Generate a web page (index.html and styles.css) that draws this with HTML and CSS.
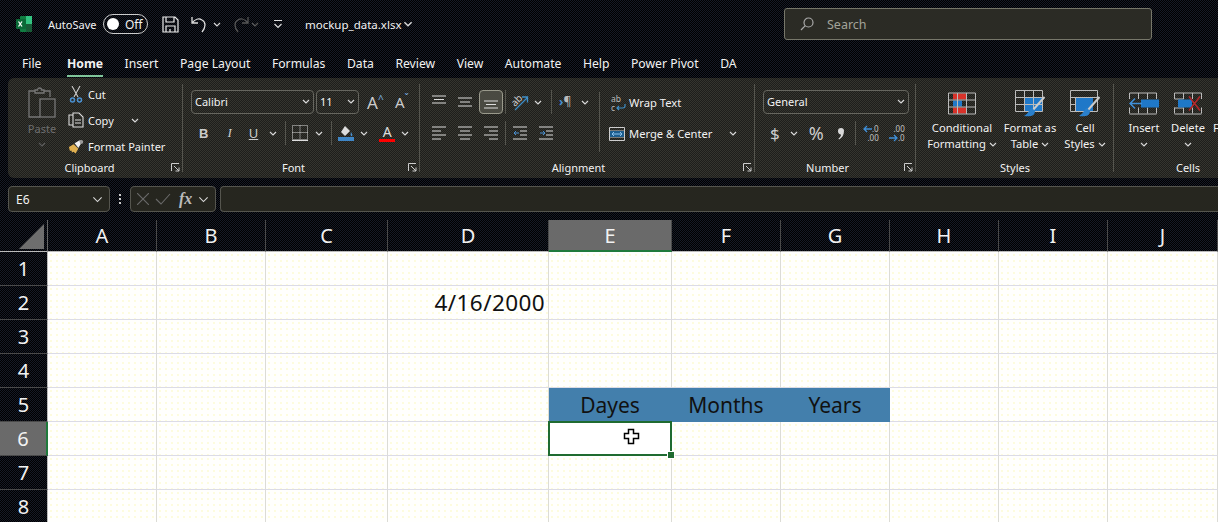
FILE: index.html
```html
<!DOCTYPE html>
<html lang="en">
<head>
  <meta charset="UTF-8" />
  <title>mockup_data.xlsx - Excel</title>
  <link rel="stylesheet" href="styles.css">
</head>
<body>
  <header class="titlebar">
    <svg class="logo" width="18" height="18" viewBox="0 0 18 18"><rect x="5" y="1" width="12" height="16" rx="1" fill="#107c41"/><rect x="11" y="1" width="6" height="8" fill="#33c481"/><rect x="11" y="9" width="6" height="8" fill="#185c37"/><rect x="1" y="4" width="10" height="10" rx="1" fill="#0b6a37"/><path d="M3.5 6.5l3.5 5M7 6.5l-3.5 5" stroke="#fff" stroke-width="1.3"/></svg>
    <span class="autosave">AutoSave</span>
    <span class="toggle"><i></i>Off</span>
    <svg class="qa-save" width="17" height="17" viewBox="0 0 17 17" fill="none" stroke="#eee" stroke-width="1.2"><path d="M1 1h12l3 3v12H1zM4 1v5h8V1M4 16v-6h9v6M8 13v3"/></svg>
    <svg class="qa-undo" width="18" height="18" viewBox="0 0 18 18" fill="none" stroke="#ddd" stroke-width="1.3"><path d="M1 2v6h6M1 8c3-4 7-5 10-3 4 2 4 7 0 12"/></svg>
    <svg class="chev qa-c1" viewBox="0 0 8 5"><path d="M1 1l3 3 3-3"/></svg>
    <svg class="qa-redo" width="18" height="18" viewBox="0 0 18 18" fill="none" stroke="#555" stroke-width="1.3"><path d="M17 2v6h-6M17 8c-3-4-7-5-10-3-4 2-4 7 0 12"/></svg>
    <svg class="chev dim qa-c2" viewBox="0 0 8 5"><path d="M1 1l3 3 3-3"/></svg>
    <svg class="qa-more" width="10" height="10" viewBox="0 0 10 10" fill="none" stroke="#ddd" stroke-width="1.2"><path d="M1 1.5h8M1.5 5l3.5 3.5L8.500 5"/></svg>
    <span class="filename">mockup_data.xlsx</span>
    <svg class="chev file-chev" viewBox="0 0 8 5"><path d="M1 1l3 3 3-3"/></svg>
    <div class="search">
      <svg width="14" height="14" viewBox="0 0 14 14" fill="none" stroke="#aaa" stroke-width="1.2"><circle cx="8.500" cy="5.500" r="4.500"/><path d="M5.300 8.700L1 13"/></svg>
      <span>Search</span>
    </div>
  </header>

  <nav class="tabs">
    <a>File</a><a class="active">Home</a><a>Insert</a><a>Page Layout</a><a>Formulas</a><a>Data</a><a>Review</a><a>View</a><a>Automate</a><a>Help</a><a>Power Pivot</a><a>DA</a>
  </nav>

  <section class="ribbon">
    <div class="group g-clipboard">
      <div class="group-body clip">
        <div class="paste">
          <svg width="29" height="33" viewBox="0 0 29 33" fill="none" stroke="#777" stroke-width="1.3"><path d="M7 4H1v26h11M16 4h6v6"/><path d="M7 5V3h2.500a2 2 0 0 1 4 0H16v3H7z"/><rect x="12" y="12" width="15" height="18"/></svg>
          <span>Paste</span>
          <svg class="chev dim" viewBox="0 0 8 5"><path d="M1 1l3 3 3-3"/></svg>
        </div>
        <ul class="clip-list">
          <li><svg width="14" height="17" viewBox="0 0 14 17" fill="none" stroke="#ccc" stroke-width="1.1"><path d="M3 0l6 11M11 0L5 11"/><circle cx="3.500" cy="14" r="2" stroke="#4a90d0" stroke-width="1.500"/><circle cx="10.500" cy="14" r="2" stroke="#4a90d0" stroke-width="1.500"/></svg>Cut</li>
          <li><svg width="16" height="16" viewBox="0 0 16 16" fill="none" stroke="#ddd" stroke-width="1.1"><path d="M5 3H1v10h4"/><path d="M5 1h6l4 4v10H5zM7 8h6M7 11h6"/></svg>Copy<svg class="chev copy-chev" viewBox="0 0 8 5"><path d="M1 1l3 3 3-3"/></svg></li>
          <li><svg width="17" height="15" viewBox="0 0 17 15"><path d="M1 8l5-3 5 5-3 5-2-2-2 1 0-2-2 0z" fill="#e0b050"/><path d="M7 4l5-3 3 0-1 3-3 5z" fill="#f2f2f2"/><path d="M12 1h4v3l-3 1z" fill="#999"/></svg>Format Painter</li>
        </ul>
      </div>
      <div class="group-label">Clipboard<svg class="launcher" viewBox="0 0 9 9"><path d="M.5 8V.5H8M3 3l5 5M4.500 8H8V4.500"/></svg></div>
    </div>

    <div class="group g-font">
      <div class="group-body stack">
        <div class="line">
          <div class="select font-name"><span>Calibri</span><svg class="chev" viewBox="0 0 8 5"><path d="M1 1l3 3 3-3"/></svg></div>
          <div class="select font-size"><span>11</span><svg class="chev" viewBox="0 0 8 5"><path d="M1 1l3 3 3-3"/></svg></div>
          <span class="grow">A<sup>^</sup></span>
          <span class="grow shrink">A<sup>ˇ</sup></span>
        </div>
        <div class="line tools">
          <b class="t-b">B</b>
          <i class="t-i">I</i>
          <u class="t-u">U</u>
          <svg class="chev t-c1" viewBox="0 0 8 5"><path d="M1 1l3 3 3-3"/></svg>
          <span class="vsep s1"></span>
          <svg class="t-border" width="16" height="16" viewBox="0 0 16 16" fill="none" stroke="#ddd" stroke-dasharray="1 1"><path d="M.5.500h15v14H.5zM8 .5v14M.5 7.500h15"/><path d="M0 15.500h16" stroke-dasharray="none"/></svg>
          <svg class="chev t-c2" viewBox="0 0 8 5"><path d="M1 1l3 3 3-3"/></svg>
          <span class="vsep s2"></span>
          <svg class="t-fill" width="16" height="16" viewBox="0 0 16 16"><path d="M7 1l5 5-5 5-4-4z" fill="#ddd"/><path d="M13 7c1 2 2 3 1 4s-2-1-1-4z" fill="#4a90d0"/><rect y="12" width="16" height="4" fill="#3f86c6"/></svg>
          <svg class="chev t-c3" viewBox="0 0 8 5"><path d="M1 1l3 3 3-3"/></svg>
          <span class="color-a">A</span>
          <svg class="chev t-c4" viewBox="0 0 8 5"><path d="M1 1l3 3 3-3"/></svg>
        </div>
      </div>
      <div class="group-label">Font<svg class="launcher" viewBox="0 0 9 9"><path d="M.5 8V.5H8M3 3l5 5M4.500 8H8V4.500"/></svg></div>
    </div>

    <div class="group g-align">
      <div class="group-body align-body">
        <div class="stack">
          <div class="line al-row">
            <svg class="al" viewBox="0 0 14 14"><path d="M0 1h14M2 4.500h10M0 8h14"/></svg>
            <svg class="al" viewBox="0 0 14 14"><path d="M0 3h14M2 7h10M0 11h14"/></svg>
            <span class="al-on"><svg class="al" viewBox="0 0 14 14"><path d="M0 6h14M2 9.500h10M0 13h14"/></svg></span>
            <span class="vsep"></span>
            <svg class="orient" width="17" height="17" viewBox="0 0 17 17" fill="none"><text x="0" y="10" transform="rotate(-45 5 8)" class="orient-text">ab</text><path d="M3 16L15 4M10 3h5.500v5.500" stroke="#3f8fc8" stroke-width="1.300"/></svg>
            <svg class="chev" viewBox="0 0 8 5"><path d="M1 1l3 3 3-3"/></svg>
            <span class="vsep sep-b"></span>
            <span class="para"><em>›</em>¶</span>
            <svg class="chev" viewBox="0 0 8 5"><path d="M1 1l3 3 3-3"/></svg>
          </div>
          <div class="line al-row second">
            <svg class="al" viewBox="0 0 14 14"><path d="M0 1h14M0 5h9M0 9h14M0 13h9"/></svg>
            <svg class="al" viewBox="0 0 14 14"><path d="M0 1h14M2 5h10M0 9h14M2 13h10"/></svg>
            <svg class="al" viewBox="0 0 14 14"><path d="M0 1h14M5 5h9M0 9h14M5 13h9"/></svg>
            <span class="vsep"></span>
            <svg class="al" viewBox="0 0 14 14"><path d="M0 1h14M7 5h7M7 9h7M0 13h14"/><path d="M6 7H1M3 5L1 7l2 2" stroke="#4a90d0"/></svg>
            <svg class="al" viewBox="0 0 14 14"><path d="M0 1h14M7 5h7M7 9h7M0 13h14"/><path d="M1 7h5M4 5l2 2-2 2" stroke="#4a90d0"/></svg>
          </div>
        </div>
        <span class="vsep tall"></span>
        <ul class="wrap-list">
          <li><span class="ab">ab<br>c<svg width="10" height="8" viewBox="0 0 10 8" fill="none" stroke="#3f8fc8" stroke-width="1.200"><path d="M9 0v2a2 2 0 0 1-2 2H1M3 2L1 4l2 2"/></svg></span>Wrap Text</li>
          <li><svg width="16" height="16" viewBox="0 0 16 16" fill="none" stroke="#ccc"><path d="M.5 1.500h15v13H.5zM.5 5h15M.5 11h15"/><rect x="1" y="5" width="14" height="6" fill="#1d5d8e" stroke="none"/><path d="M3 8h10M5 6L3 8l2 2M11 6l2 2-2 2" stroke="#8cc4ee"/></svg>Merge &amp; Center<svg class="chev merge-chev" viewBox="0 0 8 5"><path d="M1 1l3 3 3-3"/></svg></li>
        </ul>
      </div>
      <div class="group-label">Alignment<svg class="launcher" viewBox="0 0 9 9"><path d="M.5 8V.5H8M3 3l5 5M4.500 8H8V4.500"/></svg></div>
    </div>

    <div class="group g-number">
      <div class="group-body stack">
        <div class="line">
          <div class="select num-format"><span>General</span><svg class="chev" viewBox="0 0 8 5"><path d="M1 1l3 3 3-3"/></svg></div>
        </div>
        <div class="line tools num-tools">
          <span class="sym">$</span>
          <svg class="chev" viewBox="0 0 8 5"><path d="M1 1l3 3 3-3"/></svg>
          <span class="sym pct">%</span>
          <svg class="comma" width="8" height="13" viewBox="0 0 8 13"><path d="M1 4a3 3 0 1 1 6 0c0 4-2 7-5 8.500l-.6-.8C3 10.500 4 9 4 7.500 2 7.500 1 6 1 4z" fill="#d8d8d8"/></svg>
          <span class="vsep"></span>
          <span class="dec">
            <span class="dec-line"><svg width="9" height="8" viewBox="0 0 9 8" fill="none" stroke="#3f8fd8" stroke-width="1.300"><path d="M9 4H1M4 1L1 4l3 3"/></svg>.0</span>
            <span class="dec-line">.00</span>
          </span>
          <span class="dec dec-more">
            <span class="dec-line">.00</span>
            <span class="dec-line"><svg width="9" height="8" viewBox="0 0 9 8" fill="none" stroke="#3f8fd8" stroke-width="1.300"><path d="M0 4h8M5 1l3 3-3 3"/></svg>.0</span>
          </span>
        </div>
      </div>
      <div class="group-label">Number<svg class="launcher" viewBox="0 0 9 9"><path d="M.5 8V.5H8M3 3l5 5M4.500 8H8V4.500"/></svg></div>
    </div>

    <div class="group g-styles">
      <div class="group-body big-row">
        <div class="big">
          <svg width="28" height="22" viewBox="0 0 28 22"><path d="M5 1h13v6H5zM5 15h13v6H5z" fill="#d8322a"/><rect x="5" y="8" width="9" height="6" fill="#1f78c8"/><path d="M.5.500h27v21H.5zM.5 7.500h27M.5 14.500h27M9.500.5v21M18.500.5v21" fill="none" stroke="#bbb"/></svg>
          <span>Conditional<br>Formatting<svg class="chev" viewBox="0 0 8 5"><path d="M1 1l3 3 3-3"/></svg></span>
        </div>
        <div class="big">
          <svg width="30" height="27" viewBox="0 0 30 27"><rect x="10" y="7" width="18" height="14" fill="#1f78c8"/><path d="M.5.500h27v21H.5zM.5 7.500h27M.5 14.500h27M9.500.5v21M18.500.5v21" fill="none" stroke="#bbb"/><path d="M29.500 7L18 20" stroke="#ccc" stroke-width="2"/><path d="M17 18c-3 1-3 5-8 8 6 1 11 0 11-5z" fill="#2a80cc"/></svg>
          <span>Format as<br>Table<svg class="chev" viewBox="0 0 8 5"><path d="M1 1l3 3 3-3"/></svg></span>
        </div>
        <div class="big">
          <svg width="30" height="27" viewBox="0 0 30 27"><rect x="5" y="7" width="18" height="14" fill="#1f78c8"/><path d="M.5.500h27v21H.5zM.5 7.500h27M.5 14.500h5M5.500 7v14M5.500 21.500h18" fill="none" stroke="#bbb"/><path d="M29.500 7L18 20" stroke="#ccc" stroke-width="2"/><path d="M17 18c-3 1-3 5-8 8 6 1 11 0 11-5z" fill="#2a80cc"/></svg>
          <span>Cell<br>Styles<svg class="chev" viewBox="0 0 8 5"><path d="M1 1l3 3 3-3"/></svg></span>
        </div>
      </div>
      <div class="group-label">Styles</div>
    </div>

    <div class="group g-cells">
      <div class="group-body big-row">
        <div class="big cell-btn">
          <svg width="30" height="22" viewBox="0 0 30 22"><path d="M.5.500h27M.5 21.500h27M.5.500v6M.5 15v6M9.500.5v6M18.500.5v6M27.500.5v6M9.500 15v6M18.500 15v6M27.500 15v6" fill="none" stroke="#bbb"/><rect x="12" y="7" width="18" height="8" fill="#1f78c8"/><path d="M13 11H1M6 6l-5 5 5 5" fill="none" stroke="#3f8fd8" stroke-width="1.500"/></svg>
          <span>Insert<br><svg class="chev" viewBox="0 0 8 5"><path d="M1 1l3 3 3-3"/></svg></span>
        </div>
        <div class="big cell-btn">
          <svg width="28" height="22" viewBox="0 0 28 22"><path d="M.5.500h27M.5 21.500h27M.5.500v6M.5 15v6M9.500.5v6M18.500.5v6M27.500.5v6M9.500 15v6M18.500 15v6M27.500 15v6M.5 6.500h9M.5 15.500h9" fill="none" stroke="#bbb"/><rect x="4" y="7" width="14" height="8" fill="#1f78c8"/><path d="M15 4l11 14M26 4L15 18" stroke="#b5282c" stroke-width="1.500"/></svg>
          <span>Delete<br><svg class="chev" viewBox="0 0 8 5"><path d="M1 1l3 3 3-3"/></svg></span>
        </div>
        <div class="big cut-off"><span>F</span></div>
      </div>
      <div class="group-label">Cells</div>
    </div>
  </section>

  <section class="formula-bar">
    <div class="name-box"><span>E6</span><svg class="chev wide" viewBox="0 0 8 5"><path d="M1 1l3 3 3-3"/></svg></div>
    <div class="grip"><i></i><i></i><i></i></div>
    <div class="fx-box">
      <svg width="12" height="12" viewBox="0 0 12 12" stroke="#6a6a6a" fill="none" stroke-width="1.100"><path d="M0 0l12 12M12 0L0 12"/></svg>
      <svg width="16" height="12" viewBox="0 0 16 12" stroke="#6a6a6a" fill="none" stroke-width="1.100"><path d="M1 6l5 5L15 1"/></svg>
      <em>fx</em>
      <svg class="chev wide" viewBox="0 0 8 5"><path d="M1 1l3 3 3-3"/></svg>
    </div>
    <div class="fx-input"></div>
  </section>

  <main class="sheet">
    <div class="corner"><svg width="25" height="25" viewBox="0 0 25 25"><path d="M25 0v25H0z" fill="#6e6e6e"/></svg></div>
    <div class="col">A</div><div class="col">B</div><div class="col">C</div><div class="col">D</div><div class="col col-on">E</div><div class="col">F</div><div class="col">G</div><div class="col">H</div><div class="col">I</div><div class="col">J</div>

    <div class="row">1</div><div class="c"></div><div class="c"></div><div class="c"></div><div class="c"></div><div class="c"></div><div class="c"></div><div class="c"></div><div class="c"></div><div class="c"></div><div class="c"></div>
    <div class="row">2</div><div class="c"></div><div class="c"></div><div class="c"></div><div class="c date">4/16/2000</div><div class="c"></div><div class="c"></div><div class="c"></div><div class="c"></div><div class="c"></div><div class="c"></div>
    <div class="row">3</div><div class="c"></div><div class="c"></div><div class="c"></div><div class="c"></div><div class="c"></div><div class="c"></div><div class="c"></div><div class="c"></div><div class="c"></div><div class="c"></div>
    <div class="row">4</div><div class="c"></div><div class="c"></div><div class="c"></div><div class="c"></div><div class="c"></div><div class="c"></div><div class="c"></div><div class="c"></div><div class="c"></div><div class="c"></div>
    <div class="row">5</div><div class="c"></div><div class="c"></div><div class="c"></div><div class="c"></div><div class="c hd">Dayes</div><div class="c hd">Months</div><div class="c hd">Years</div><div class="c"></div><div class="c"></div><div class="c"></div>
    <div class="row row-on">6</div><div class="c"></div><div class="c"></div><div class="c"></div><div class="c"></div>
    <div class="c selected">
      <svg class="cursor" width="17" height="17" viewBox="0 0 17 17"><path d="M5.500 1.500h5v4h5v5h-5v5h-5v-5h-4v-5h4z" fill="#fff" stroke="#000" stroke-width="1.500"/></svg>
    </div>
    <div class="c"></div><div class="c"></div><div class="c"></div><div class="c"></div><div class="c"></div>
    <div class="row">7</div><div class="c"></div><div class="c"></div><div class="c"></div><div class="c"></div><div class="c"></div><div class="c"></div><div class="c"></div><div class="c"></div><div class="c"></div><div class="c"></div>
    <div class="row">8</div><div class="c"></div><div class="c"></div><div class="c"></div><div class="c"></div><div class="c"></div><div class="c"></div><div class="c"></div><div class="c"></div><div class="c"></div><div class="c"></div>
  </main>
</body>
</html>
```

FILE: styles.css
```css
* {
  box-sizing: border-box;
}

html, body {
  height: 522px;
  overflow: hidden;
}

body {
  margin: 0;
  width: 1218px;
  background: repeating-conic-gradient(#000 0 25%, #161a26 0 50%) 0 0 / 2px 2px;
  color: #f2f2f2;
  font-family: "Noto Sans", "Open Sans", sans-serif;
  font-size: 12px;
}

.chev {
  width: 8px;
  height: 5px;
  flex: none;
  fill: none;
  stroke: #d8d8d8;
  stroke-width: 1.2;
}

.chev.dim {
  stroke: #5c5c5c;
}

.chev.wide {
  width: 11px;
  height: 7px;
  stroke-width: .8;
}

/* title bar */
.titlebar {
  height: 48px;
  display: flex;
  align-items: center;
  padding-left: 15px;
}

.autosave {
  margin-left: 15px;
  width: 50px;
  font-size: 11px;
}

.toggle {
  margin-left: 5px;
  width: 45px;
  height: 20px;
  border: 1px solid #ccc;
  border-radius: 10px;
  display: flex;
  align-items: center;
  padding-left: 3px;
  font-size: 12px;
  gap: 6px;
}

.toggle i {
  width: 12px;
  height: 12px;
  border-radius: 50%;
  background: #fff;
}

.qa-save { margin-left: 14px; }
.qa-undo { margin-left: 12px; }
.qa-c1 { margin-left: 4px; }
.qa-redo { margin-left: 10px; }
.qa-c2 { margin-left: 2px; }
.qa-more { margin-left: 14px; }

.filename {
  margin-left: 22px;
  width: 93px;
  font-size: 11.500px;
  white-space: nowrap;
}

.file-chev {
  margin-left: 5px;
  width: 10px;
  height: 6px;
}

.search {
  margin-left: 371px;
  width: 368px;
  height: 32px;
  background: #2b2b25;
  border: 1px solid #77776a;
  border-radius: 3px;
  display: flex;
  align-items: center;
  gap: 13px;
  padding-left: 15px;
  color: #a3a39a;
  font-size: 12.500px;
}

/* tabs */
.tabs {
  height: 30px;
  display: flex;
  gap: 21.500px;
  padding: 3px 0 0 22px;
  font-size: 12.200px;
  line-height: 26px;
}

.tabs a {
  position: relative;
  white-space: nowrap;
}

.tabs .active {
  margin-left: 4px;
  font-weight: 700;
}

.tabs .active::after {
  content: "";
  position: absolute;
  left: 0;
  right: 0;
  bottom: 1px;
  height: 2px;
  background: #7fc59a;
}

/* ribbon */
.ribbon {
  margin-left: 8px;
  height: 100px;
  display: flex;
  padding-top: 6px;
  border-radius: 6px 0 0 6px;
  background: repeating-conic-gradient(#1e1e1b 0 25%, #35352f 0 50%) 0 0 / 2px 2px;
  overflow: hidden;
}

.group {
  position: relative;
  flex: none;
  display: flex;
  flex-direction: column;
  height: 94px;
}

.group::after {
  content: "";
  position: absolute;
  top: 0;
  right: 0;
  bottom: 6px;
  width: 1px;
  background: #55554e;
}

.group-body {
  flex: 1;
  min-height: 0;
}

.group-label {
  height: 18px;
  text-align: center;
  font-size: 11px;
  line-height: 16px;
}

.launcher {
  position: absolute;
  right: 3px;
  bottom: 6px;
  width: 9px;
  height: 9px;
  fill: none;
  stroke: #ccc;
}

.g-clipboard { width: 175px; }
.g-font { width: 237px; }
.g-align { width: 335px; }
.g-number { width: 161px; }
.g-styles { width: 198px; }
.g-cells { width: 104px; }
.g-cells::after { display: none; }

.g-clipboard .group-label { padding-right: 12px; }
.g-font .group-label { padding-right: 16px; }
.g-align .group-label { padding-right: 18px; }
.g-number .group-label { padding-right: 16px; }
.g-cells .group-label { width: 148px; }

/* clipboard */
.clip {
  display: flex;
  padding-left: 16px;
}

.paste {
  width: 36px;
  display: flex;
  flex-direction: column;
  align-items: center;
  padding-top: 3px;
  color: #6e6e6e;
  font-size: 11px;
}

.paste span {
  line-height: 18px;
}

.paste .chev {
  margin-top: 4px;
}

.clip-list {
  list-style: none;
  margin: -3px 0 0 8px;
  padding: 0;
}

.clip-list li {
  height: 26px;
  display: flex;
  align-items: center;
  white-space: nowrap;
  font-size: 11px;
}

.clip-list svg {
  flex: none;
  width: 16px;
  margin-right: 4px;
}

.clip-list svg.copy-chev {
  width: 8px;
  margin: 0 0 0 17px;
}

/* shared two row tools */
.stack {
  display: flex;
  flex-direction: column;
  padding-top: 6px;
}

.line {
  height: 24px;
  display: flex;
  align-items: center;
}

.tools {
  margin-top: 7px;
}

.select {
  height: 24px;
  border: 1px solid #66665f;
  border-radius: 4px;
  display: flex;
  align-items: center;
  justify-content: space-between;
  padding: 0 3px 1px;
  font-size: 11px;
}

.vsep {
  width: 1px;
  height: 24px;
  flex: none;
  background: #55554e;
}

/* font */
.g-font .stack {
  padding-left: 8px;
}

.font-name { width: 123px; }
.font-size { width: 43px; margin-left: 2px; }

.grow {
  margin-left: 8px;
  width: 20px;
  color: #ccc;
  font-size: 17px;
}

.grow.shrink {
  margin-left: 8px;
  font-size: 15px;
}

.grow sup {
  font-size: 10px;
  color: #7fb2e0;
  vertical-align: 6px;
  line-height: 0;
}

.tools b, .tools i, .tools u {
  color: #ccc;
  font-size: 13px;
  font-style: normal;
}

.t-b { margin-left: 8px; font-family: "Liberation Sans", sans-serif; }
.tools .t-i { margin-left: 19px; font-style: italic; font-family: "Liberation Serif", serif; }
.t-u { margin-left: 17px; }
.t-c1 { margin-left: 11px; }
.s1 { margin-left: 8px; }
.t-border { margin-left: 6px; }
.t-c2 { margin-left: 7px; }
.s2 { margin-left: 8px; }
.t-fill { margin-left: 6px; }
.t-c3 { margin-left: 6px; }

.color-a {
  margin-left: 11px;
  width: 16px;
  text-align: center;
  font-size: 14px;
  line-height: 15px;
  color: #ddd;
  border-bottom: 3px solid #f00;
}

.t-c4 { margin-left: 6px; }

/* alignment */
.align-body {
  display: flex;
  padding-left: 12px;
}

.al {
  width: 14px;
  height: 14px;
  flex: none;
  fill: none;
  stroke: #ddd;
}

.al-row {
  gap: 12px;
}

.al-row .vsep {
  margin: 0 -5px;
}

.al-row .vsep.sep-b {
  margin-left: -3px;
}

.al-on {
  margin: 0 -5px;
  width: 24px;
  height: 24px;
  border: 1px solid #9a9a8c;
  border-radius: 4px;
  background: #4a4a42;
  display: flex;
  align-items: center;
  justify-content: center;
}

.orient {
  margin-left: -1px;
  overflow: visible;
}

.orient-text {
  fill: #ccc;
  font-size: 10px;
}

.al-row:first-child .chev { margin-left: -7px; }

.para {
  width: 17px;
  color: #bbb;
  font-size: 12px;
  line-height: 16px;
  white-space: nowrap;
}

.para em {
  color: #4a90d0;
  font-weight: 700;
  font-style: normal;
}

.second { margin-top: 7px; }

.vsep.tall {
  margin: 8px 0 0 10px;
  height: 60px;
}

.wrap-list {
  list-style: none;
  margin: 3px 0 0 9px;
  padding: 0;
}

.wrap-list li {
  height: 31px;
  display: flex;
  align-items: center;
  white-space: nowrap;
  font-size: 11.200px;
}

.ab {
  position: relative;
  width: 15px;
  margin: 0 3px 0 2px;
  color: #bbb;
  font-size: 8.500px;
  line-height: 9px;
}

.wrap-list .ab svg {
  position: absolute;
  right: 0;
  bottom: 0;
  margin: 0;
}

.wrap-list svg {
  margin-right: 4px;
}

.wrap-list .merge-chev {
  margin: 0 0 0 17px;
}

/* number */
.g-number .stack {
  padding-left: 8px;
}

.num-format { width: 146px; }

.sym {
  color: #ccc;
  font-size: 17px;
}

.num-tools {
  padding-left: 7px;
}

.num-tools .chev { margin-left: 10px; }
.pct { margin-left: 11px; font-size: 18px; }

.comma {
  margin-left: 13px;
  flex: none;
}

.num-tools .vsep { margin-left: 10px; }

.dec {
  margin-left: 6px;
  width: 17px;
  display: flex;
  flex-direction: column;
  align-items: flex-end;
  color: #c4c4c4;
  font-size: 8px;
  line-height: 9px;
  white-space: nowrap;
}

.dec-more {
  margin-left: 9px;
}

.dec-line {
  height: 9px;
  display: flex;
  align-items: center;
}

/* big buttons */
.big-row {
  display: flex;
  padding-top: 6px;
}

.big {
  flex: none;
  display: flex;
  flex-direction: column;
  align-items: center;
  text-align: center;
  font-size: 11.200px;
  line-height: 16px;
  white-space: nowrap;
}

.big > svg {
  flex: none;
  height: 27px;
  margin-bottom: 3px;
}

.big .chev {
  margin-left: 3px;
  vertical-align: 1px;
}

.g-styles .big:nth-child(1) { width: 88px; margin-left: 2px; }
.g-styles .big:nth-child(2) { width: 58px; margin-left: -5px; }
.g-styles .big:nth-child(3) { width: 54px; margin-left: -1px; }

.g-cells .big-row { padding-left: 8px; }
.cell-btn { width: 44px; }
.cell-btn .chev { margin-left: 0; }
.big.cut-off { padding-top: 30px; margin-left: 3px; }

/* formula bar */
.formula-bar {
  height: 26px;
  margin-top: 8px;
  display: flex;
}

.name-box {
  margin-left: 8px;
  width: 102px;
  display: flex;
  align-items: center;
  justify-content: space-between;
  padding: 0 6px 0 7px;
  background: #26261f;
  border: 1px solid #55554e;
  border-radius: 4px;
  font-size: 12px;
}

.grip {
  width: 20px;
  display: flex;
  flex-direction: column;
  align-items: center;
  justify-content: center;
  gap: 2px;
}

.grip i {
  width: 2px;
  height: 2px;
  background: #ccc;
}

.fx-box {
  width: 86px;
  display: flex;
  align-items: center;
  padding-left: 6px;
  gap: 6px;
  background: #26261f;
  border: 1px solid #55554e;
  border-radius: 4px;
}

.fx-box em {
  margin-left: 2px;
  color: #bbb;
  font-family: "Liberation Serif", serif;
  font-size: 16px;
  font-weight: 700;
}

.fx-input {
  margin-left: 4px;
  flex: 1;
  background: #26261f;
  border: 1px solid #55554e;
  border-right: 0;
  border-radius: 4px 0 0 4px;
}

/* sheet */
.sheet {
  margin-top: 8px;
  display: grid;
  grid-template-columns: 48px 109px 109px 122px 161px 123px 109px 109px 109px 109px 110px;
  grid-template-rows: 32px repeat(8, 34px);
}

.corner {
  display: flex;
  justify-content: flex-end;
  padding: 4px 3px 0 0;
  border-right: 1px solid #666;
  border-bottom: 1px solid #bbb;
}

.col, .row {
  display: flex;
  align-items: center;
  justify-content: center;
  font-size: 20px;
}

.col {
  border-right: 1px solid #4a4a4a;
  border-bottom: 1px solid #bbb;
}

.row {
  border-right: 1px solid #bbb;
  border-bottom: 1px solid #4a4a4a;
}

.col-on {
  background: #6a6a6a;
  border-bottom: 2px solid #1f7a3c;
}

.row-on {
  background: #6a6a6a;
  border-right: 2px solid #1f7a3c;
}

.c {
  background: #fffffd radial-gradient(circle, #fbf9c8 .5px, transparent 1px) 0 0 / 6px 6px;
  border-right: 1px solid #dcdcd6;
  border-bottom: 1px solid #dcdce6;
  color: #111;
  font-size: 21px;
  display: flex;
  align-items: center;
}

.date {
  justify-content: flex-end;
  padding-right: 3px;
  font-size: 22.500px;
  letter-spacing: .4px;
}

.c.hd {
  background: #437fac;
  border-color: transparent;
  justify-content: center;
}

.c.selected {
  position: relative;
  background: #fff;
}

.selected::before {
  content: "";
  position: absolute;
  inset: -1px;
  border: 2px solid #1f6b30;
}

.selected::after {
  content: "";
  position: absolute;
  right: -4px;
  bottom: -4px;
  width: 6px;
  height: 6px;
  background: #1f6b30;
  border: 1px solid #fff;
}

.cursor {
  position: absolute;
  left: 74px;
  top: 6px;
}
```
